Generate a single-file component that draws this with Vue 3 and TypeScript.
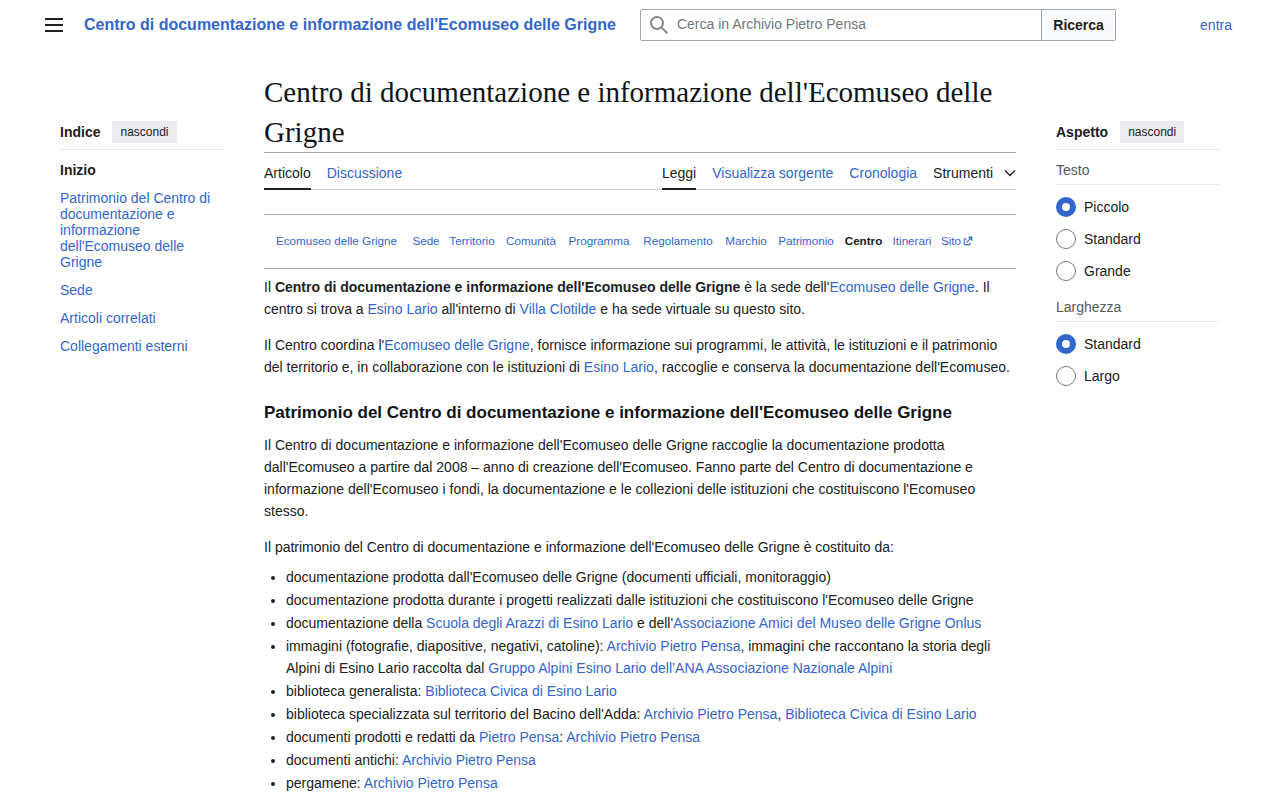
<script setup lang="ts">
import { ref } from 'vue'

interface Piece {
  text: string
  link?: boolean
  bold?: boolean
}

const t = (text: string): Piece => ({ text })
const a = (text: string): Piece => ({ text, link: true })
const b = (text: string): Piece => ({ text, bold: true })

const query = ref('')
const textSize = ref('Piccolo')
const pageWidth = ref('Standard')

const textSizes = ['Piccolo', 'Standard', 'Grande']
const pageWidths = ['Standard', 'Largo']

const contents = [
  "Patrimonio del Centro di documentazione e informazione dell'Ecomuseo delle Grigne",
  'Sede',
  'Articoli correlati',
  'Collegamenti esterni',
]

const sections = [
  'Ecomuseo delle Grigne', 'Sede', 'Territorio', 'Comunità', 'Programma', 'Regolamento',
  'Marchio', 'Patrimonio', 'Centro', 'Itinerari', 'Sito',
]

const intro: Piece[][] = [
  [
    t('Il '), b("Centro di documentazione e informazione dell'Ecomuseo delle Grigne"),
    t(" è la sede dell'"), a('Ecomuseo delle Grigne'), t('. Il centro si trova a '), a('Esino Lario'),
    t(" all'interno di "), a('Villa Clotilde'), t(' e ha sede virtuale su questo sito.'),
  ],
  [
    t("Il Centro coordina l'"), a('Ecomuseo delle Grigne'),
    t(', fornisce informazione sui programmi, le attività, le istituzioni e il patrimonio del territorio e, in collaborazione con le istituzioni di '),
    a('Esino Lario'), t(", raccoglie e conserva la documentazione dell'Ecomuseo."),
  ],
]

const heritage: Piece[][] = [
  [t('documentazione prodotta dall\'Ecomuseo delle Grigne (documenti ufficiali, monitoraggio)')],
  [t('documentazione prodotta durante i progetti realizzati dalle istituzioni che costituiscono l\'Ecomuseo delle Grigne')],
  [t('documentazione della '), a('Scuola degli Arazzi di Esino Lario'), t(" e dell'"), a('Associazione Amici del Museo delle Grigne Onlus')],
  [
    t('immagini (fotografie, diapositive, negativi, catoline): '), a('Archivio Pietro Pensa'),
    t(', immagini che raccontano la storia degli Alpini di Esino Lario raccolta dal '),
    a('Gruppo Alpini Esino Lario dell’ANA Associazione Nazionale Alpini'),
  ],
  [t('biblioteca generalista: '), a('Biblioteca Civica di Esino Lario')],
  [t("biblioteca specializzata sul territorio del Bacino dell'Adda: "), a('Archivio Pietro Pensa'), t(', '), a('Biblioteca Civica di Esino Lario')],
  [t('documenti prodotti e redatti da '), a('Pietro Pensa'), t(': '), a('Archivio Pietro Pensa')],
  [t('documenti antichi: '), a('Archivio Pietro Pensa')],
  [t('pergamene: '), a('Archivio Pietro Pensa')],
]
</script>

<template>
  <div class="page">
    <header class="top">
      <button class="menu" type="button" aria-label="Menu principale">
        <svg width="20" height="20" viewBox="0 0 20 20"><path d="M1 3v2h18V3zm0 8h18V9H1zm0 6h18v-2H1z" fill="#202122" /></svg>
      </button>
      <a class="brand" href="#">Centro di documentazione e informazione dell'Ecomuseo delle Grigne</a>
      <form class="search" role="search" @submit.prevent>
        <div class="field">
          <svg width="20" height="20" viewBox="0 0 20 20"><path fill="#72777d" fill-opacity=".87" d="M12.2 13.6a7 7 0 1 1 1.4-1.4l5.4 5.4-1.4 1.4zM3 8a5 5 0 1 0 10 0A5 5 0 0 0 3 8" /></svg>
          <input v-model="query" type="search" aria-label="Cerca in Archivio Pietro Pensa" placeholder="Cerca in Archivio Pietro Pensa">
        </div>
        <button type="submit">Ricerca</button>
      </form>
      <a class="login" href="#">entra</a>
    </header>

    <div class="columns">
      <nav class="side" aria-label="Indice">
        <div class="side-head"><strong>Indice</strong><button type="button">nascondi</button></div>
        <ul class="toc">
          <li><a class="current" href="#">Inizio</a></li>
          <li v-for="item in contents" :key="item"><a href="#">{{ item }}</a></li>
        </ul>
      </nav>

      <main>
        <h1>Centro di documentazione e informazione dell'Ecomuseo delle Grigne</h1>
        <nav class="tabs" aria-label="Pagina">
          <a class="active" href="#">Articolo</a>
          <a href="#">Discussione</a>
          <span class="spacer"></span>
          <a class="active" href="#">Leggi</a>
          <a href="#">Visualizza sorgente</a>
          <a href="#">Cronologia</a>
          <button type="button">
            Strumenti
            <svg width="12" height="12" viewBox="0 0 12 12"><path d="M1 3.5l5 5 5-5" fill="none" stroke="#202122" stroke-width="1.4" /></svg>
          </button>
        </nav>

        <ul class="sections">
          <li v-for="s in sections" :key="s">
            <small>
              <strong v-if="s === 'Centro'">{{ s }}</strong>
              <a v-else href="#">{{ s }}<svg v-if="s === 'Sito'" width="10" height="10" viewBox="0 0 12 12"><path d="M6 1h5v5L8.86 3.85 4.7 8 4 7.3l4.15-4.16zM2 3h2v1H2v6h6V8h1v2a1 1 0 0 1-1 1H2a1 1 0 0 1-1-1V4a1 1 0 0 1 1-1" fill="#3366cc" stroke="#3366cc" stroke-width=".3" /></svg></a>
            </small>
          </li>
        </ul>

        <p v-for="(para, i) in intro" :key="i">
          <template v-for="(p, j) in para" :key="j"><a v-if="p.link" href="#">{{ p.text }}</a><b v-else-if="p.bold">{{ p.text }}</b><template v-else>{{ p.text }}</template></template>
        </p>

        <h2>Patrimonio del Centro di documentazione e informazione dell'Ecomuseo delle Grigne</h2>
        <p>Il Centro di documentazione e informazione dell'Ecomuseo delle Grigne raccoglie la documentazione prodotta dall'Ecomuseo a partire dal 2008 – anno di creazione dell'Ecomuseo. Fanno parte del Centro di documentazione e informazione dell'Ecomuseo i fondi, la documentazione e le collezioni delle istituzioni che costituiscono l'Ecomuseo stesso.</p>
        <p>Il patrimonio del Centro di documentazione e informazione dell'Ecomuseo delle Grigne è costituito da:</p>
        <ul class="list">
          <li v-for="(item, i) in heritage" :key="i">
            <template v-for="(p, j) in item" :key="j"><a v-if="p.link" href="#">{{ p.text }}</a><template v-else>{{ p.text }}</template></template>
          </li>
        </ul>
      </main>

      <aside class="side">
        <div class="side-head"><strong>Aspetto</strong><button type="button">nascondi</button></div>
        <fieldset>
          <legend>Testo</legend>
          <label v-for="o in textSizes" :key="o"><input v-model="textSize" type="radio" name="text-size" :value="o">{{ o }}</label>
        </fieldset>
        <fieldset>
          <legend>Larghezza</legend>
          <label v-for="o in pageWidths" :key="o"><input v-model="pageWidth" type="radio" name="page-width" :value="o">{{ o }}</label>
        </fieldset>
      </aside>
    </div>
  </div>
</template>

<style>
body {
  background: #fff;
}
</style>

<style scoped>
.page {
  color: #202122;
  font: 14px/22px "Liberation Sans", Arial, sans-serif;
}
a {
  color: #3366cc;
  text-decoration: none;
}
a:hover {
  text-decoration: underline;
}
button,
input {
  font: inherit;
  color: inherit;
}
button {
  cursor: pointer;
}
ul {
  margin: 0;
  padding: 0;
  list-style: none;
}

.top {
  display: flex;
  align-items: center;
  height: 50px;
  padding: 0 48px 0 44px;
}
.menu {
  display: flex;
  margin-right: 20px;
  padding: 0;
  border: 0;
  background: none;
}
.brand {
  margin-right: 24px;
  font-size: 16px;
  font-weight: bold;
}
.search {
  display: flex;
  flex: 0 1 476px;
  height: 32px;
  box-sizing: border-box;
  border: 1px solid #a2a9b1;
  border-radius: 2px;
}
.field {
  display: flex;
  flex: 1;
  align-items: center;
  gap: 8px;
  padding-left: 8px;
}
.field input {
  flex: 1;
  min-width: 0;
  padding: 0 8px 2px 0;
  border: 0;
  outline: 0;
  background: none;
}
.field input::placeholder {
  color: #72777d;
  opacity: 1;
}
.search button {
  padding: 0 11px;
  border: 0;
  border-left: 1px solid #a2a9b1;
  background: #f8f9fa;
  font-weight: bold;
}
.login {
  margin-left: auto;
}

.columns {
  display: grid;
  grid-template-columns: 164px minmax(0, 1fr) 164px;
  column-gap: 40px;
  align-items: start;
  padding: 22px 60px 0;
}

.side {
  padding-top: 43px;
}
.side-head {
  display: flex;
  align-items: center;
  gap: 12px;
  height: 34px;
  border-bottom: 1px solid #eaecf0;
}
.side-head button {
  height: 22px;
  padding: 0 8px;
  border: 0;
  background: #eaecf0;
  font-size: 12px;
}
.toc {
  padding-top: 6px;
}
.toc a {
  display: block;
  padding: 6px 0;
  line-height: 16px;
}
.toc .current {
  color: #202122;
  font-weight: bold;
}

fieldset {
  min-width: 0;
  margin: 0;
  padding: 0;
  border: 0;
}
legend {
  box-sizing: border-box;
  width: 100%;
  height: 35px;
  margin-bottom: 6px;
  padding: 9px 0 0;
  border-bottom: 1px solid #eaecf0;
  color: #54595d;
}
label {
  display: flex;
  align-items: center;
  gap: 8px;
  height: 32px;
}
label input {
  appearance: none;
  width: 20px;
  height: 20px;
  margin: 0;
  border: 1px solid #72777d;
  border-radius: 50%;
}
label input:checked {
  border: 6px solid #3366cc;
}

h1 {
  margin: 0;
  border-bottom: 1px solid #a2a9b1;
  color: #101418;
  font: 29px/40px "Liberation Serif", "Times New Roman", serif;
}
.tabs {
  display: flex;
  gap: 16px;
  height: 36px;
  border-bottom: 1px solid #c8ccd1;
}
.tabs a,
.tabs button {
  box-sizing: border-box;
  height: 37px;
  padding: 9px 0 0;
}
.tabs .active {
  border-bottom: 2px solid #202122;
  color: #202122;
}
.tabs button {
  display: flex;
  align-items: center;
  gap: 11px;
  padding: 3px 0 0;
  border: 0;
  background: none;
}
.spacer {
  flex: 1;
}

.sections {
  display: grid;
  grid-template-columns: 145fr 34fr 58fr 60fr 76fr 82fr 54fr 66fr 49fr 48fr 42fr 38fr;
  align-items: center;
  height: 51px;
  margin: 24px 0 7px;
  padding-bottom: 2px;
  border: solid #a2a9b1;
  border-width: 1px 0;
  text-align: center;
  white-space: nowrap;
}
.sections small {
  display: block;
}
.sections li {
  display: flex;
  justify-content: center;
}
.sections svg {
  margin-left: 2px;
  vertical-align: -1px;
}

p {
  margin: 0 0 14px;
}
h2 {
  margin: 22px 0 8px;
  color: #101418;
  font-size: 17px;
  line-height: 26px;
}
.list {
  margin-top: -6px;
  padding-left: 22px;
  list-style: disc;
}
.list li {
  margin-bottom: 1px;
}
</style>
